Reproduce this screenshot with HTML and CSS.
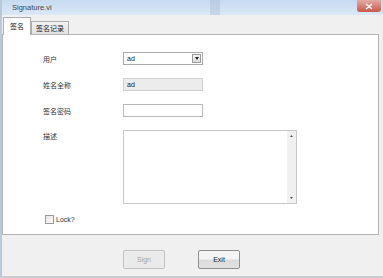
FILE: index.html
```html
<!DOCTYPE html>
<html lang="zh">
<head>
    <meta charset="UTF-8">
    <meta name="viewport" content="width=device-width, initial-scale=1.0">
    <title>Signature.vi</title>
    <link rel="stylesheet" href="styles.css">
</head>
<body>
    <div class="window">
        <!-- 标题栏 -->
        <div class="titlebar">
            <span class="title">Signature.vi</span>
            <span class="glass"></span>
            <span class="close">
                <svg width="8" height="7" viewBox="0 0 8 7"><path d="M1 1L7 6M7 1L1 6" stroke="#fff" stroke-width="1.4"/></svg>
            </span>
        </div>

        <!-- 选项卡 -->
        <div class="tabs">
            <div class="tab active">签名</div>
            <div class="tab">签名记录</div>
        </div>

        <div class="panel">
            <div class="form">
                <div class="label">用户</div>
                <div class="field select">
                    <span>ad</span>
                    <span class="arrow">
                        <svg width="4" height="3" viewBox="0 0 4 3"><path d="M0 0H4L2 3Z" fill="#222"/></svg>
                    </span>
                </div>

                <div class="label">姓名全称</div>
                <div class="field readonly">ad</div>

                <div class="label">签名密码</div>
                <div class="field"></div>

                <div class="label top">描述</div>
                <div class="memo">
                    <div class="scroll">
                        <svg width="3" height="2" viewBox="0 0 3 2"><path d="M0 2H3L1.5 0Z" fill="#555"/></svg>
                        <svg width="3" height="2" viewBox="0 0 3 2"><path d="M0 0H3L1.5 2Z" fill="#555"/></svg>
                    </div>
                </div>
            </div>

            <label class="lock"><span class="box"></span>Lock?</label>
        </div>

        <div class="footer">
            <button class="btn" disabled>Sign</button>
            <button class="btn">Exit</button>
        </div>
    </div>
</body>
</html>
```

FILE: styles.css
```css
body {
    margin: 0;
    padding: 0;
    background-color: #f0f0f0;
    font-family: "Liberation Sans", "Noto Sans CJK SC", sans-serif;
    color: #222;
}
.window {
    width: 383px;
    height: 278px;
    display: flex;
    flex-direction: column;
    background-color: #f0f0f0;
    border-left: 2px solid #b9c9da;
    border-bottom: 2px solid #c8ccd2;
    box-sizing: border-box;
}
.titlebar {
    height: 15px;
    flex: none;
    display: flex;
    align-items: center;
    position: relative;
    background: linear-gradient(#c6daf0, #dbe8f6);
}
.title {
    margin-left: 10px;
    font-size: 7.5px;
    color: #444;
}
.glass {
    position: absolute;
    left: 208px;
    top: 0;
    width: 10px;
    height: 15px;
    background: rgba(160, 180, 205, 0.35);
}
.close {
    position: absolute;
    right: 2px;
    top: 0;
    width: 24px;
    height: 12px;
    display: flex;
    align-items: center;
    justify-content: center;
    background: linear-gradient(#e4aaa2, #c9584b);
    border-radius: 0 0 3px 3px;
}
.tabs {
    height: 19px;
    flex: none;
    display: flex;
    align-items: flex-end;
    padding-left: 1px;
}
.tab {
    font-size: 7px;
    font-family: "Noto Sans CJK SC", sans-serif;
    height: 13px;
    line-height: 13px;
    padding: 0 4px;
    border: 1px solid #adadad;
    border-bottom: none;
    background: linear-gradient(#f2f2f2, #e1e1e1);
    margin-bottom: -1px;
}
.tab.active {
    height: 17px;
    line-height: 16px;
    padding: 0 6px;
    background: #fff;
    position: relative;
    z-index: 1;
}
.panel {
    height: 201px;
    flex: none;
    margin-right: 4px;
    background: #fff;
    border: 1px solid #b4b4b4;
    box-sizing: border-box;
    padding: 17px 0 0 39px;
}
.form {
    display: grid;
    grid-template-columns: 81px 173px;
    row-gap: 13px;
    align-items: center;
}
.label {
    font-family: "Noto Sans CJK SC", sans-serif;
    font-size: 7px;
    color: #333;
    padding-left: 1px;
}
.label.top {
    align-self: start;
    margin-top: 1px;
}
.field {
    width: 80px;
    height: 13px;
    box-sizing: border-box;
    border: 1px solid #b8b8b8;
    font-size: 7px;
    line-height: 11px;
    padding-left: 3px;
    background: #fff;
}
.field.readonly {
    background: #ececec;
    border-color: #d0d0d0;
}
.select {
    display: flex;
    justify-content: space-between;
    align-items: center;
    border-color: #a8a8a8;
}
.arrow {
    width: 9px;
    height: 9px;
    margin-right: 1px;
    box-sizing: border-box;
    border: 1px solid #9a9a9a;
    background: linear-gradient(#f4f4f4, #dcdcdc);
    display: flex;
    align-items: center;
    justify-content: center;
}
.memo {
    width: 174px;
    height: 74px;
    box-sizing: border-box;
    border: 1px solid #c8c8c8;
    display: flex;
    justify-content: flex-end;
}
.scroll {
    width: 9px;
    background: #f0f0f0;
    display: flex;
    flex-direction: column;
    justify-content: space-between;
    align-items: center;
    padding: 4px 0;
}
.lock {
    display: flex;
    align-items: center;
    gap: 2px;
    margin: 11px 0 0 3px;
    font-size: 7px;
    color: #333;
}
.box {
    width: 7px;
    height: 7px;
    border: 1px solid #9a9a9a;
    background: linear-gradient(135deg, #e6e6e6, #fafafa);
}
.footer {
    flex: 1;
    display: flex;
    gap: 33px;
    padding: 15px 0 0 121px;
}
.btn {
    width: 42px;
    height: 19px;
    font-family: "Liberation Sans", sans-serif;
    font-size: 7px;
    color: #222;
    border: 1px solid #8e8e8e;
    border-radius: 2px;
    background: linear-gradient(#f4f4f4 45%, #dcdcdc 55%, #e0e0e0);
    padding: 0;
}
.btn:disabled {
    color: #a5a5a5;
    border-color: #c2c2c2;
    background: #eaeaea;
}
```
